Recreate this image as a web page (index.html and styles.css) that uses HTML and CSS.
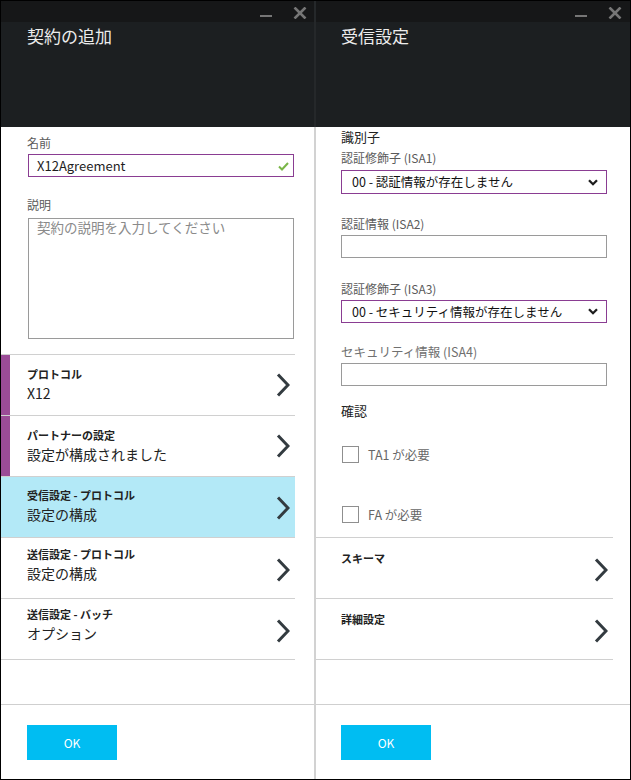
FILE: index.html
```html
<!DOCTYPE html>
<html lang="ja">
<head>
<meta charset="utf-8">
<title>契約の追加</title>
<link rel="stylesheet" href="styles.css">
</head>
<body>
<div class="frame">
  <section class="blade blade-left">
    <header class="blade-header">
      <div class="titlebar">
        <svg class="win-min" width="12" height="2" viewBox="0 0 12 2"><rect width="12" height="2" fill="#767676"/></svg>
        <svg class="win-close" width="14" height="12" viewBox="0 0 14 12"><path d="M1.5 0.5 L12.5 11.5 M12.5 0.5 L1.5 11.5" stroke="#767676" stroke-width="2.6" fill="none"/></svg>
      </div>
      <h1 class="blade-title">契約の追加</h1>
    </header>
    <div class="blade-content content-left">
      <div class="field-label label-first">名前</div>
      <div class="text-input valid">
        <span class="input-text">X12Agreement</span>
        <svg class="check" width="11" height="9" viewBox="0 0 11 9"><polyline points="1,4.5 4,7.5 10,1" fill="none" stroke="#7ab648" stroke-width="2"/></svg>
      </div>
      <div class="field-label label-desc">説明</div>
      <div class="textarea">契約の説明を入力してください</div>
      <ul class="nav-list list-left">
        <li class="nav-item flagged pad-12">
          <div class="nav-text"><div class="nav-label">プロトコル</div><div class="nav-value">X12</div></div>
          <svg class="chev" width="14" height="24" viewBox="0 0 14 24"><polyline points="2,1.5 12,12 2,22.5" fill="none" stroke="#333b40" stroke-width="3"/></svg>
        </li>
        <li class="nav-item flagged pad-12">
          <div class="nav-text"><div class="nav-label">パートナーの設定</div><div class="nav-value">設定が構成されました</div></div>
          <svg class="chev" width="14" height="24" viewBox="0 0 14 24"><polyline points="2,1.5 12,12 2,22.5" fill="none" stroke="#333b40" stroke-width="3"/></svg>
        </li>
        <li class="nav-item selected pad-11">
          <div class="nav-text"><div class="nav-label">受信設定 - プロトコル</div><div class="nav-value">設定の構成</div></div>
          <svg class="chev" width="14" height="24" viewBox="0 0 14 24"><polyline points="2,1.5 12,12 2,22.5" fill="none" stroke="#333b40" stroke-width="3"/></svg>
        </li>
        <li class="nav-item pad-9">
          <div class="nav-text"><div class="nav-label">送信設定 - プロトコル</div><div class="nav-value">設定の構成</div></div>
          <svg class="chev" width="14" height="24" viewBox="0 0 14 24"><polyline points="2,1.5 12,12 2,22.5" fill="none" stroke="#333b40" stroke-width="3"/></svg>
        </li>
        <li class="nav-item pad-8">
          <div class="nav-text"><div class="nav-label">送信設定 - バッチ</div><div class="nav-value">オプション</div></div>
          <svg class="chev" width="14" height="24" viewBox="0 0 14 24"><polyline points="2,1.5 12,12 2,22.5" fill="none" stroke="#333b40" stroke-width="3"/></svg>
        </li>
      </ul>
    </div>
    <footer class="blade-footer footer-left">
      <button class="ok-btn">OK</button>
    </footer>
  </section>

  <div class="divider"><div class="divider-top"></div><div class="divider-bottom"></div></div>

  <section class="blade blade-right">
    <header class="blade-header">
      <div class="titlebar titlebar-right">
        <svg class="win-min" width="12" height="2" viewBox="0 0 12 2"><rect width="12" height="2" fill="#767676"/></svg>
        <svg class="win-close" width="14" height="12" viewBox="0 0 14 12"><path d="M1.5 0.5 L12.5 11.5 M12.5 0.5 L1.5 11.5" stroke="#767676" stroke-width="2.6" fill="none"/></svg>
      </div>
      <h1 class="blade-title">受信設定</h1>
    </header>
    <div class="blade-content content-right">
      <div class="section-title title-id">識別子</div>
      <div class="field-label label-isa1">認証修飾子 (ISA1)</div>
      <div class="select select-isa1">
        <span class="select-text">00 - 認証情報が存在しません</span>
        <svg class="select-chev" width="10" height="7" viewBox="0 0 10 7"><polyline points="1,1.2 5,5.2 9,1.2" fill="none" stroke="#1e1e1e" stroke-width="2.3"/></svg>
      </div>
      <div class="field-label label-isa2">認証情報 (ISA2)</div>
      <div class="text-input plain input-isa2"></div>
      <div class="field-label label-isa3">認証修飾子 (ISA3)</div>
      <div class="select select-isa3">
        <span class="select-text">00 - セキュリティ情報が存在しません</span>
        <svg class="select-chev" width="10" height="7" viewBox="0 0 10 7"><polyline points="1,1.2 5,5.2 9,1.2" fill="none" stroke="#1e1e1e" stroke-width="2.3"/></svg>
      </div>
      <div class="field-label label-isa4">セキュリティ情報 (ISA4)</div>
      <div class="text-input plain input-isa4"></div>
      <div class="section-title title-ack">確認</div>
      <label class="check-row row-ta1"><span class="checkbox"></span><span class="check-label">TA1 が必要</span></label>
      <label class="check-row row-fa"><span class="checkbox"></span><span class="check-label">FA が必要</span></label>
      <ul class="nav-list list-right">
        <li class="nav-item nav-item-right">
          <div class="nav-text"><div class="nav-label">スキーマ</div></div>
          <svg class="chev" width="14" height="24" viewBox="0 0 14 24"><polyline points="2,1.5 12,12 2,22.5" fill="none" stroke="#333b40" stroke-width="3"/></svg>
        </li>
        <li class="nav-item nav-item-right">
          <div class="nav-text"><div class="nav-label">詳細設定</div></div>
          <svg class="chev" width="14" height="24" viewBox="0 0 14 24"><polyline points="2,1.5 12,12 2,22.5" fill="none" stroke="#333b40" stroke-width="3"/></svg>
        </li>
      </ul>
    </div>
    <footer class="blade-footer footer-right">
      <button class="ok-btn">OK</button>
    </footer>
  </section>
</div>
</body>
</html>
```

FILE: styles.css
```css
* { box-sizing: border-box; }
html, body { margin: 0; padding: 0; background: #fff; }
body {
  font-family: "Noto Sans CJK JP", "Noto Sans", sans-serif;
  color: #222;
}
.frame {
  width: 631px;
  height: 780px;
  border: 1px solid #000;
  display: flex;
  overflow: hidden;
}
.blade {
  display: flex;
  flex-direction: column;
  height: 100%;
  background: #fff;
}
.blade-left { width: 313px; }
.blade-right { width: 314px; }

.divider { width: 2px; display: flex; flex-direction: column; }
.divider-top { height: 126px; background: #25282a; }
.divider-bottom { flex: 1; background: #d2d2d2; }

.blade-header {
  height: 126px;
  background: #1c1f21;
  flex: none;
}
.titlebar {
  height: 21px;
  background: #161718;
  display: flex;
  justify-content: flex-end;
  align-items: flex-start;
  padding-right: 7px;
}
.titlebar-right { padding-right: 8px; }
.win-min { margin-top: 14px; margin-right: 21px; }
.win-close { margin-top: 6px; }
.blade-title {
  margin: 3px 0 0 26px;
  font-size: 17px;
  line-height: 22px;
  font-weight: 400;
  color: #ececec;
}
.blade-right .blade-title { margin-left: 25px; }

.blade-content {
  flex: 1;
  display: flex;
  flex-direction: column;
  align-items: flex-start;
}
.content-left { padding: 8px 0 0 26px; }
.content-right { padding: 1px 0 0 25px; }

.field-label {
  font-size: 12px;
  line-height: 16px;
  color: #5a5a5a;
}
.label-desc { margin-top: 20px; }

.text-input {
  width: 266px;
  height: 23px;
  border: 1px solid #9a9a9a;
  display: flex;
  align-items: center;
  justify-content: space-between;
}
.content-left .text-input { margin-left: 1px; margin-top: 3px; }
.text-input.valid { border-color: #8a3d92; padding: 0 4px 0 8px; }
.input-text { font-size: 13px; line-height: 18px; color: #1e1e1e; }
.check { margin-top: 1px; }

.textarea {
  margin: 5px 0 0 1px;
  width: 266px;
  height: 121px;
  border: 1px solid #9a9a9a;
  padding: 0 0 0 8px;
  font-size: 13.5px;
  line-height: 17px;
  color: #8a8a8a;
}

.nav-list {
  list-style: none;
  margin: 0;
  padding: 0;
  border-top: 1px solid #d0d0d0;
}
.list-left { margin: 15px 0 0 -26px; width: 294px; }
.list-right { margin: 14px 0 0 -25px; width: 297px; }
.nav-item {
  height: 61px;
  border-bottom: 1px solid #d0d0d0;
  display: flex;
  align-items: flex-start;
  justify-content: space-between;
  padding: 0 5px 0 26px;
}
.nav-item .chev { align-self: center; }
.pad-12 { padding-top: 12px; }
.pad-11 { padding-top: 11px; }
.pad-9 { padding-top: 9px; }
.pad-8 { padding-top: 8px; }
.pad-12 .chev { margin-top: -12px; }
.pad-11 .chev { margin-top: -10px; }
.pad-9 .chev { margin-top: -6px; }
.pad-8 .chev { margin-top: -5px; }
.nav-item-right { padding-left: 25px; }
.nav-item-right .nav-text { padding-top: 13px; }
.nav-item-right .chev { align-self: flex-start; margin-top: 20px; }
.nav-item.flagged { box-shadow: inset 9px 0 0 #9b4c97; }
.nav-item.selected { background: #b3e9f7; }
.nav-text { display: flex; flex-direction: column; }
.nav-label {
  font-size: 11px;
  line-height: 15px;
  font-weight: 700;
  color: #222;
}
.nav-value {
  font-size: 14px;
  line-height: 22px;
  color: #222;
}

.section-title {
  font-size: 13px;
  line-height: 18px;
  color: #222;
}
.label-isa1 { margin-top: 4px; }
.select {
  width: 266px;
  height: 24px;
  border: 1px solid #8a3d92;
  display: flex;
  align-items: center;
  justify-content: space-between;
  padding: 0 8px 0 10px;
}
.select-isa1 { margin-top: 4px; }
.select-text { font-size: 12.5px; line-height: 18px; color: #111; }
.label-isa2 { margin-top: 22px; }
.input-isa2 { margin-top: 3px; }
.label-isa3 { margin-top: 23px; }
.select-isa3 { margin-top: 3px; height: 23px; }
.label-isa4 { margin-top: 21px; font-size: 12.5px; color: #707070; }
.input-isa4 { margin-top: 3px; }
.title-ack { margin-top: 16px; }

.check-row {
  display: flex;
  align-items: center;
  height: 17px;
  margin-left: 1px;
}
.row-ta1 { margin-top: 26px; }
.row-fa { margin-top: 43px; }
.checkbox {
  width: 17px;
  height: 17px;
  border: 1px solid #8f8f8f;
  background: #fff;
}
.check-label {
  margin-left: 9px;
  font-size: 12.5px;
  line-height: 17px;
  color: #666;
}

.blade-footer {
  height: 75px;
  border-top: 1px solid #cfcfcf;
  flex: none;
}
.footer-left { padding: 20px 0 0 26px; }
.footer-right { padding: 20px 0 0 25px; }
.ok-btn {
  width: 90px;
  height: 35px;
  border: none;
  background: #00bdf2;
  color: #fff;
  font-family: "Noto Sans CJK JP", "Noto Sans", sans-serif;
  font-size: 12px;
  padding: 0;
}
```
